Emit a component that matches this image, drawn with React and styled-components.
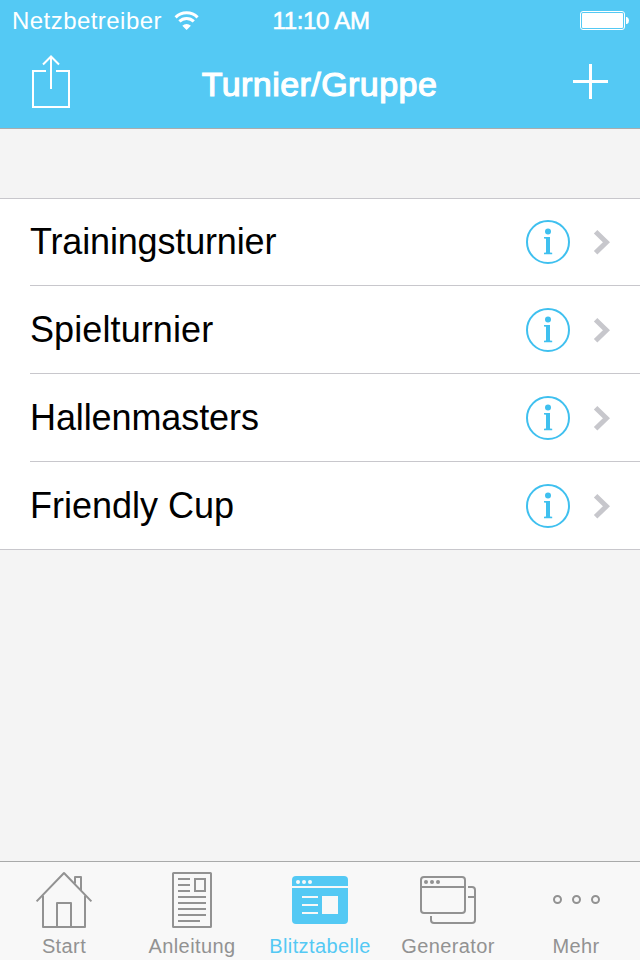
import React, { useState } from "react";
import styled, { createGlobalStyle } from "styled-components";

const BLUE = "#54c9f4";
const GRAY = "#929292";

const GlobalStyle = createGlobalStyle`
  * {
    box-sizing: border-box;
  }

  body {
    margin: 0;
    font-family: "Liberation Sans", Arial, sans-serif;
    background: #f4f4f4;
  }
`;

const tournaments = [
  { name: "Trainingsturnier", spacing: "-0.16px" },
  { name: "Spielturnier", spacing: "0.1px" },
  { name: "Hallenmasters", spacing: "-0.1px" },
  { name: "Friendly Cup", spacing: "0px" },
];

const tabs = [
  { label: "Start", Icon: HouseIcon },
  { label: "Anleitung", Icon: DocumentIcon },
  { label: "Blitztabelle", Icon: TableIcon },
  { label: "Generator", Icon: WindowsIcon },
  { label: "Mehr", Icon: MoreIcon },
];

function WifiIcon() {
  return (
    <svg width="26" height="20" viewBox="174 10 26 20" fill="none" stroke="#fff">
      <path d="M175.6 16.4 a15.6 15.6 0 0 1 22 0" strokeWidth="3" />
      <path d="M179.4 20.4 a10.2 10.2 0 0 1 14.4 0" strokeWidth="3" />
      <path d="M186.6 29 l-4.3 -4.3 a6.2 6.2 0 0 1 8.6 0 z" fill="#fff" stroke="none" />
    </svg>
  );
}

function BatteryIcon() {
  return (
    <svg width="50" height="20" viewBox="580 11 50 20">
      <rect x="580.5" y="11.5" width="44" height="18" rx="2.5" fill="none" stroke="#fff" />
      <rect x="582" y="13" width="41" height="15" rx="1" fill="#fff" />
      <path d="M626 17 h1 q2 1 2 3.5 t-2 3.5 h-1 z" fill="#fff" />
    </svg>
  );
}

function ShareIcon() {
  return (
    <svg width="40" height="54" viewBox="31 55 40 54" fill="none" stroke="#fff" strokeWidth="2">
      <path d="M46 71 H33 V107 H69 V71 H56" />
      <path d="M51 89 V57 M43 64.5 L51 56.5 L59 64.5" />
    </svg>
  );
}

function PlusIcon() {
  return (
    <svg width="35" height="35" viewBox="0 0 35 35" stroke="#fff" strokeWidth="3">
      <path d="M0 17.5 H35 M17.5 0 V35" />
    </svg>
  );
}

function InfoIcon() {
  return (
    <svg width="44" height="44" viewBox="0 0 44 44">
      <circle cx="22" cy="22" r="21" fill="none" stroke="#3fc0ef" strokeWidth="2" />
      <circle cx="22" cy="11.6" r="3" fill="#3fc0ef" />
      <path d="M18 17 H24 V32.4 L26.2 32.8 V34.2 H18 V32.8 L20 32.4 V18.8 L18 18.4 Z" fill="#3fc0ef" />
    </svg>
  );
}

function ChevronIcon() {
  return (
    <svg width="18" height="28" viewBox="593 228 18 28" fill="none" stroke="#c7c7cc" strokeWidth="5">
      <path d="M595.6 231.8 L606.4 242.3 L595.6 252.8" />
    </svg>
  );
}

function HouseIcon() {
  return (
    <svg width="60" height="60" viewBox="34 870 60 60" fill="none" stroke={GRAY} strokeWidth="2" strokeLinejoin="round">
      <path d="M36.6 901.4 L64 873 L91.4 901.4" />
      <path d="M43 895.5 V927 H85 V895.5" />
      <path d="M57 926 V903 H71 V926" />
      <path d="M75 883.5 V877 H81 V890" />
    </svg>
  );
}

function DocumentIcon() {
  return (
    <svg width="60" height="60" viewBox="162 870 60 60" fill="none" stroke={GRAY} strokeWidth="2" strokeLinejoin="round">
      <rect x="173" y="873" width="38" height="54" rx="0.5" />
      <path d="M178 879 h12 M178 885 h12 M178 891 h12 M178 897 h28 M178 903 h28 M178 909 h28 M178 915 h28 M178 921 h22" />
      <rect x="195" y="879" width="10" height="12" strokeLinejoin="miter" />
    </svg>
  );
}

function TableIcon() {
  return (
    <svg width="60" height="60" viewBox="290 870 60 60">
      <path d="M292 886 V880 a4 4 0 0 1 4 -4 H344 a4 4 0 0 1 4 4 V886 Z" fill={BLUE} />
      <path d="M292 888 H348 V920 a4 4 0 0 1 -4 4 H296 a4 4 0 0 1 -4 -4 Z" fill={BLUE} />
      <g fill="#f8f8f8">
        <circle cx="298" cy="882" r="2" />
        <circle cx="304" cy="882" r="2" />
        <circle cx="310" cy="882" r="2" />
        <rect x="322" y="896" width="16" height="18" />
        <path d="M302 896 h16 v2 h-16 z M302 904 h16 v2 h-16 z M302 912 h16 v2 h-16 z" />
      </g>
    </svg>
  );
}

function WindowsIcon() {
  return (
    <svg width="60" height="60" viewBox="418 870 60 60" fill="none" stroke={GRAY} strokeWidth="2">
      <rect x="421" y="877" width="44" height="36" rx="3" />
      <path d="M421 887 H465" />
      <path d="M468 887 H472 a3 3 0 0 1 3 3 V920 a3 3 0 0 1 -3 3 H434 a3 3 0 0 1 -3 -3 V916 M468 897 H475" />
      <g fill={GRAY} stroke="none">
        <circle cx="426" cy="882" r="2" />
        <circle cx="432" cy="882" r="2" />
        <circle cx="438" cy="882" r="2" />
      </g>
    </svg>
  );
}

function MoreIcon() {
  return (
    <svg width="60" height="60" viewBox="546 870 60 60" fill="none" stroke={GRAY} strokeWidth="2">
      <circle cx="557.5" cy="899.5" r="3.5" />
      <circle cx="576.5" cy="899.5" r="3.5" />
      <circle cx="595.5" cy="899.5" r="3.5" />
    </svg>
  );
}

function App() {
  const [activeTab, setActiveTab] = useState("Blitztabelle");

  return (
    <Screen>
      <GlobalStyle />
      <Header>
        <StatusBar>
          <Carrier>
            <span>Netzbetreiber</span>
            <WifiIcon />
          </Carrier>
          <Time>11:10 AM</Time>
          <Battery>
            <BatteryIcon />
          </Battery>
        </StatusBar>
        <NavBar>
          <NavButton aria-label="Teilen">
            <ShareIcon />
          </NavButton>
          <Title>Turnier/Gruppe</Title>
          <NavButton aria-label="Neu" $right>
            <PlusIcon />
          </NavButton>
        </NavBar>
      </Header>

      <Content>
        <List>
          {tournaments.map((item) => (
            <Row key={item.name}>
              <RowName $spacing={item.spacing}>{item.name}</RowName>
              <InfoIcon />
              <ChevronIcon />
            </Row>
          ))}
        </List>
      </Content>

      <TabBar>
        {tabs.map(({ label, Icon }) => (
          <Tab
            key={label}
            $active={activeTab === label}
            onClick={() => setActiveTab(label)}
          >
            <Icon />
            <span>{label}</span>
          </Tab>
        ))}
      </TabBar>
    </Screen>
  );
}

const Screen = styled.div`
  width: 640px;
  height: 960px;
  display: flex;
  flex-direction: column;
  overflow: hidden;
  background: #f4f4f4;

  svg {
    display: block;
    flex-shrink: 0;
  }
`;

const Header = styled.header`
  height: 129px;
  color: white;
  background: ${BLUE};
  border-bottom: 1px solid #a9acae;
`;

const StatusBar = styled.div`
  height: 40px;
  padding: 2px 10px 0 12px;
  display: grid;
  grid-template-columns: 1fr auto 1fr;
  align-items: center;
  font-size: 24px;
  line-height: 38px;
`;

const Carrier = styled.div`
  display: flex;
  align-items: center;
  gap: 12px;
  letter-spacing: 0.45px;
`;

const Time = styled.div`
  letter-spacing: -0.3px;
  -webkit-text-stroke: 0.6px white;
`;

const Battery = styled.div`
  display: flex;
  justify-content: flex-end;
`;

const NavBar = styled.div`
  height: 88px;
  padding: 0 32px 0 31px;
  display: grid;
  grid-template-columns: 1fr auto 1fr;
  align-items: center;
`;

const NavButton = styled.button`
  padding: 0;
  border: 0;
  background: none;
  justify-self: ${(props) => (props.$right ? "end" : "start")};
  margin-bottom: ${(props) => (props.$right ? "5px" : "4px")};
`;

const Title = styled.h1`
  margin: 0;
  font-size: 34px;
  line-height: 40px;
  font-weight: normal;
  letter-spacing: 0.45px;
  -webkit-text-stroke: 1.2px white;
`;

const Content = styled.main`
  flex: 1;
  padding-top: 69px;
`;

const List = styled.ul`
  margin: 0;
  padding: 0 0 0 30px;
  list-style: none;
  background: white;
  border-top: 1px solid #c8c7cc;
  border-bottom: 1px solid #c8c7cc;
`;

const Row = styled.li`
  height: 88px;
  padding-right: 29px;
  display: flex;
  align-items: center;
  gap: 23px;
  border-bottom: 1px solid #c8c7cc;

  &:first-child {
    height: 87px;
  }

  &:last-child {
    height: 87px;
    border-bottom: 0;
  }
`;

const RowName = styled.span`
  flex: 1;
  color: black;
  font-size: 36px;
  line-height: 44px;
  letter-spacing: ${(props) => props.$spacing};
`;

const TabBar = styled.nav`
  height: 99px;
  display: grid;
  grid-template-columns: repeat(5, 128px);
  background: #f8f8f8;
  border-top: 1px solid #a9aaaa;
`;

const Tab = styled.button`
  padding: 8px 0 0;
  border: 0;
  background: none;
  display: flex;
  flex-direction: column;
  align-items: center;
  justify-content: flex-start;
  font-family: inherit;
  font-size: 20px;
  line-height: 24px;
  letter-spacing: 0.4px;
  color: ${(props) => (props.$active ? BLUE : GRAY)};

  span {
    margin-top: 4px;
  }
`;

export default App;
